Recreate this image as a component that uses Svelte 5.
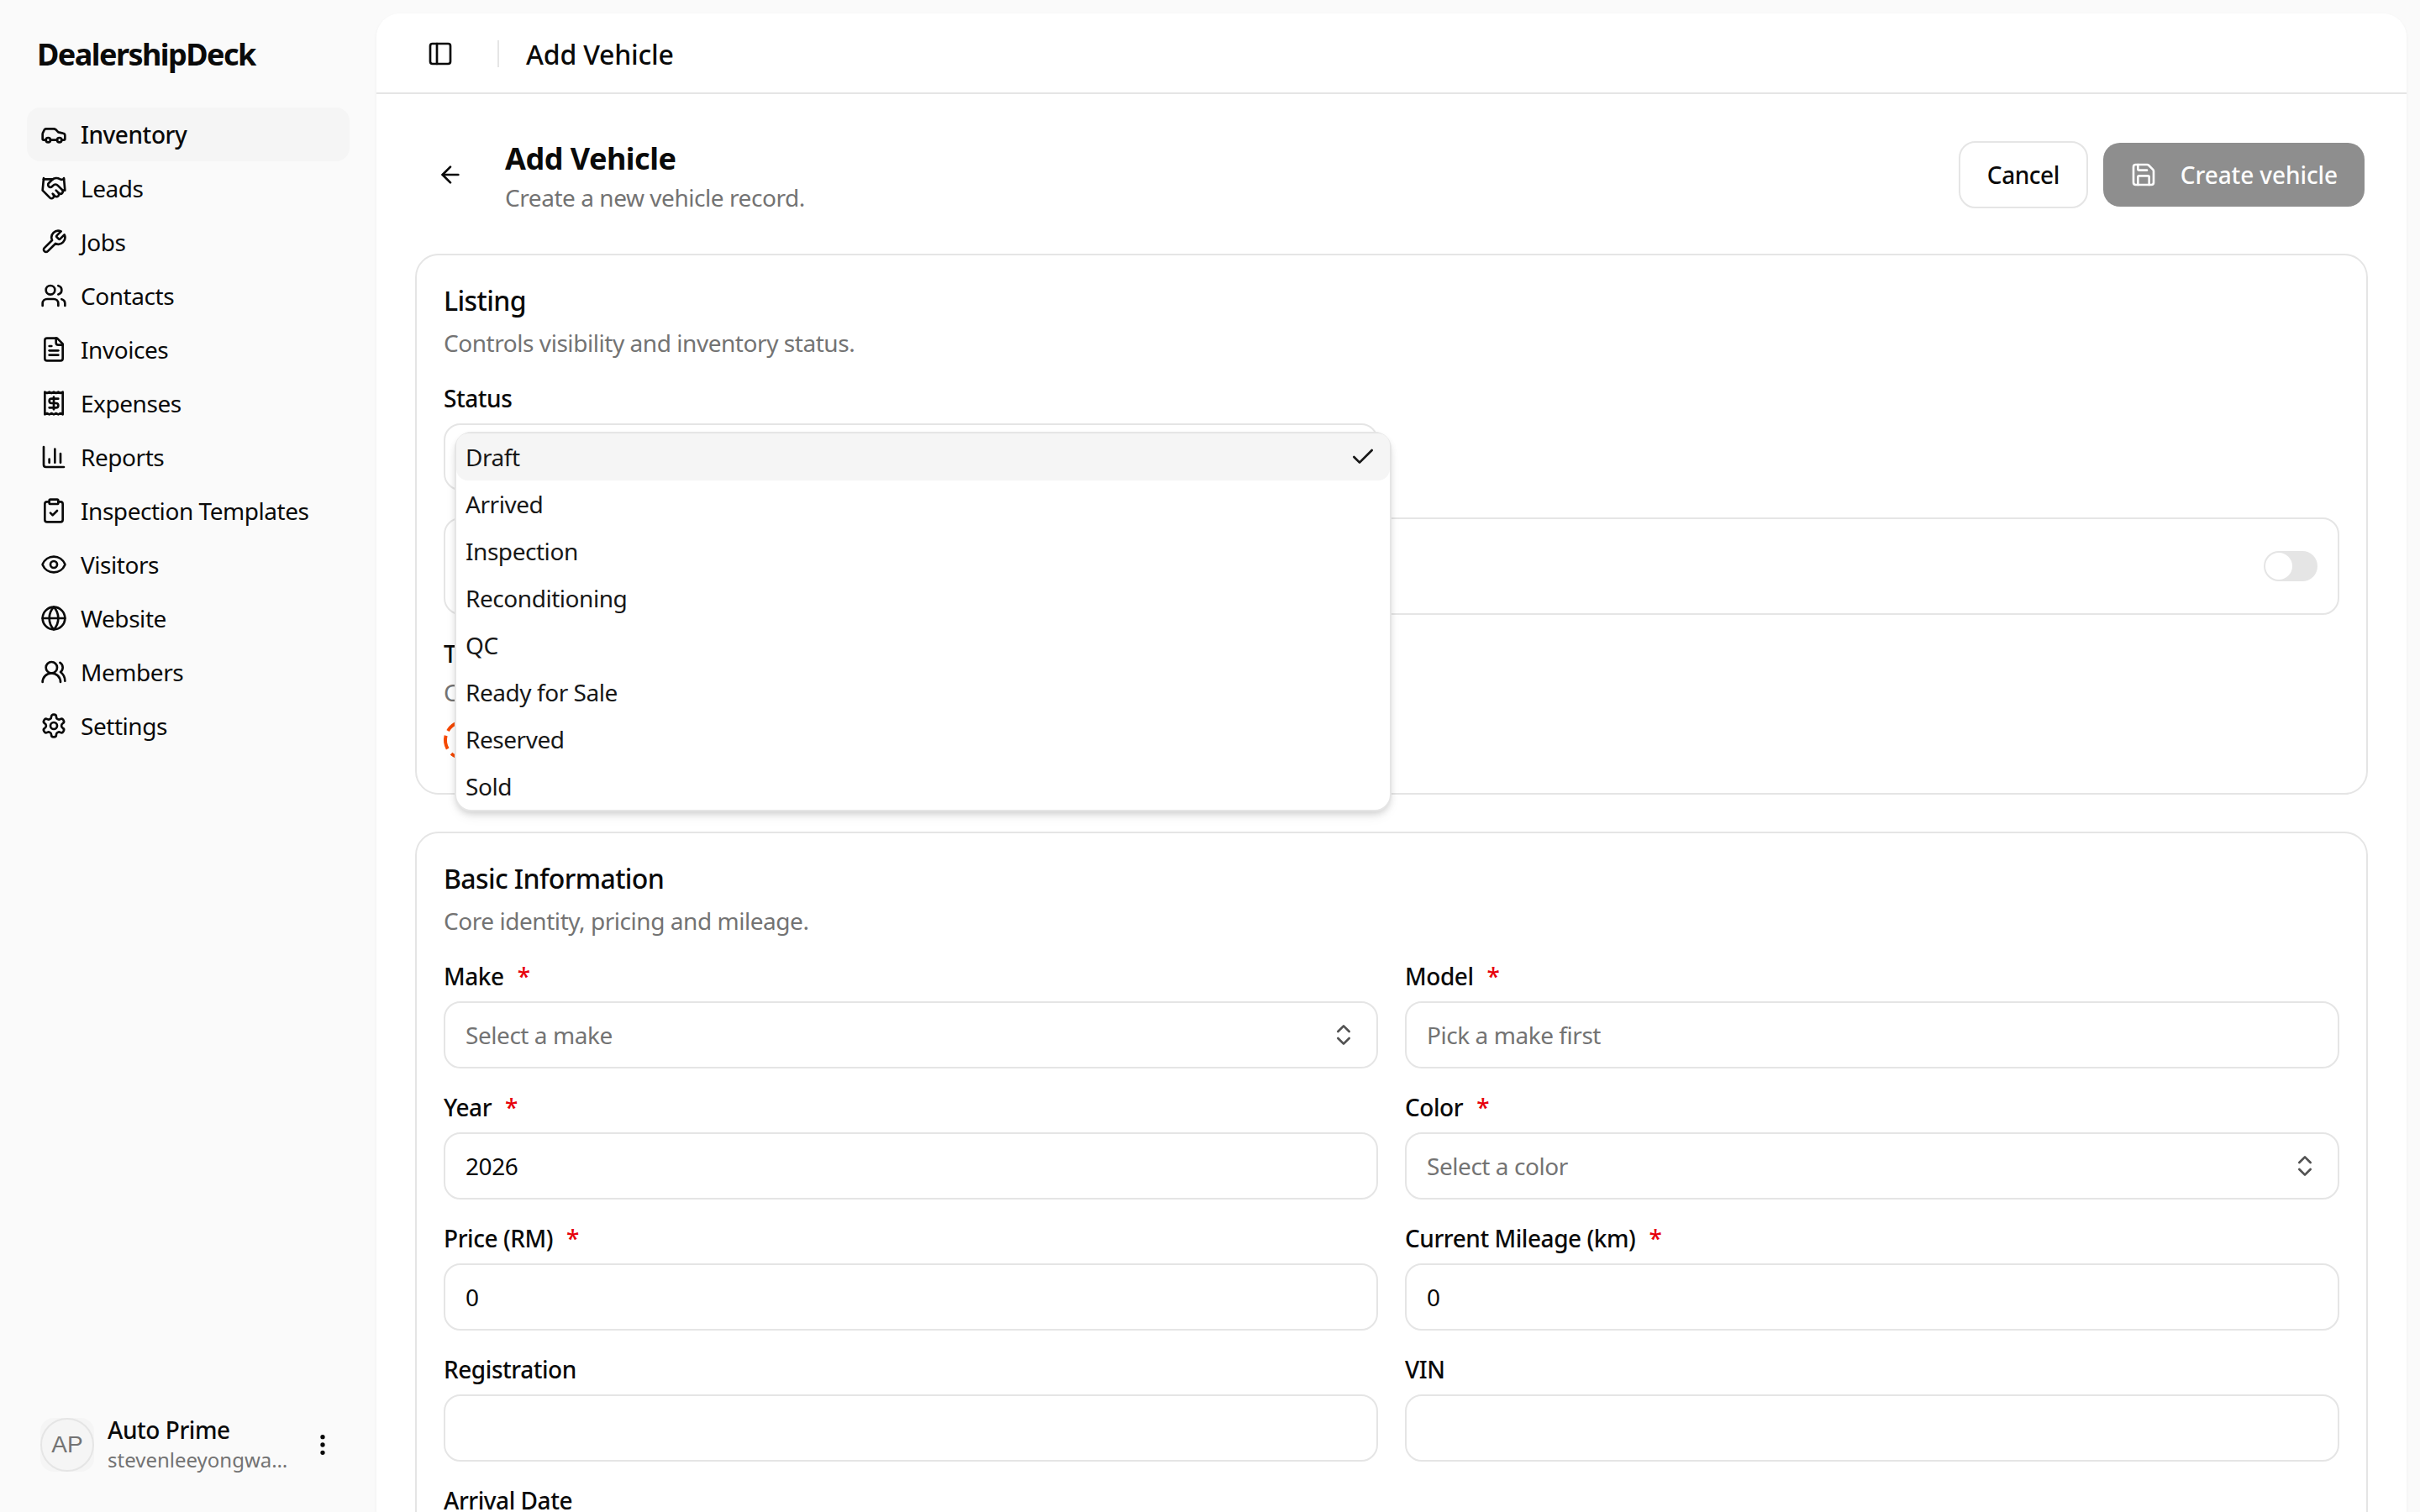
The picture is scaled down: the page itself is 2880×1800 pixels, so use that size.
<script>
  const icons = {
    car: ['M19 17h2c.6 0 1-.4 1-1v-3c0-.9-.7-1.7-1.5-1.9C18.7 10.6 16 10 16 10s-1.3-1.4-2.2-2.3c-.5-.4-1.1-.7-1.8-.7H5c-.6 0-1.1.4-1.4.9l-1.4 2.9A3.7 3.7 0 0 0 2 12v4c0 .6.4 1 1 1h2', 'M5 17a2 2 0 1 0 4 0a2 2 0 1 0-4 0', 'M9 17h6', 'M15 17a2 2 0 1 0 4 0a2 2 0 1 0-4 0'],
    handshake: ['m11 17 2 2a1 1 0 1 0 3-3', 'm14 14 2.5 2.5a1 1 0 1 0 3-3l-3.88-3.88a3 3 0 0 0-4.24 0l-.88.88a1 1 0 1 1-3-3l2.81-2.81a5.79 5.79 0 0 1 7.06-.87l.47.28a2 2 0 0 0 1.42.25L21 4', 'm21 3 1 11h-2', 'M3 3 2 14l6.5 6.5a1 1 0 1 0 3-3', 'M3 4h8'],
    wrench: ['M14.7 6.3a1 1 0 0 0 0 1.4l1.6 1.6a1 1 0 0 0 1.4 0l3.77-3.77a6 6 0 0 1-7.94 7.94l-6.91 6.91a2.12 2.12 0 0 1-3-3l6.91-6.91a6 6 0 0 1 7.94-7.94l-3.76 3.76z'],
    users: ['M16 21v-2a4 4 0 0 0-4-4H6a4 4 0 0 0-4 4v2', 'M5 7a4 4 0 1 0 8 0a4 4 0 1 0-8 0', 'M22 21v-2a4 4 0 0 0-3-3.87', 'M16 3.13a4 4 0 0 1 0 7.75'],
    file: ['M15 2H6a2 2 0 0 0-2 2v16a2 2 0 0 0 2 2h12a2 2 0 0 0 2-2V7Z', 'M14 2v4a2 2 0 0 0 2 2h4', 'M10 9H8', 'M16 13H8', 'M16 17H8'],
    receipt: ['M4 2v20l2-1 2 1 2-1 2 1 2-1 2 1 2-1 2 1V2l-2 1-2-1-2 1-2-1-2 1-2-1-2 1Z', 'M16 8h-6a2 2 0 1 0 0 4h4a2 2 0 1 1 0 4H8', 'M12 17.5v-11'],
    chart: ['M3 3v16a2 2 0 0 0 2 2h16', 'M18 17V9', 'M13 17V5', 'M8 17v-3'],
    clipboard: ['M9 2h6a1 1 0 0 1 1 1v2a1 1 0 0 1-1 1H9a1 1 0 0 1-1-1V3a1 1 0 0 1 1-1z', 'M16 4h2a2 2 0 0 1 2 2v14a2 2 0 0 1-2 2H6a2 2 0 0 1-2-2V6a2 2 0 0 1 2-2h2', 'm9 14 2 2 4-4'],
    eye: ['M2.062 12.348a1 1 0 0 1 0-.696 10.75 10.75 0 0 1 19.876 0 1 1 0 0 1 0 .696 10.75 10.75 0 0 1-19.876 0', 'M9 12a3 3 0 1 0 6 0a3 3 0 1 0-6 0'],
    globe: ['M2 12a10 10 0 1 0 20 0a10 10 0 1 0-20 0', 'M12 2a14.5 14.5 0 0 0 0 20 14.5 14.5 0 0 0 0-20', 'M2 12h20'],
    members: ['M18 21a8 8 0 0 0-16 0', 'M5 8a5 5 0 1 0 10 0a5 5 0 1 0-10 0', 'M22 20c0-3.37-2-6.5-4-8a5 5 0 0 0-.45-8.3'],
    settings: ['M12.22 2h-.44a2 2 0 0 0-2 2v.18a2 2 0 0 1-1 1.73l-.43.25a2 2 0 0 1-2 0l-.15-.08a2 2 0 0 0-2.73.73l-.22.38a2 2 0 0 0 .73 2.73l.15.1a2 2 0 0 1 1 1.72v.51a2 2 0 0 1-1 1.74l-.15.09a2 2 0 0 0-.73 2.73l.22.38a2 2 0 0 0 2.73.73l.15-.08a2 2 0 0 1 2 0l.43.25a2 2 0 0 1 1 1.73V20a2 2 0 0 0 2 2h.44a2 2 0 0 0 2-2v-.18a2 2 0 0 1 1-1.73l.43-.25a2 2 0 0 1 2 0l.15.08a2 2 0 0 0 2.73-.73l.22-.39a2 2 0 0 0-.73-2.73l-.15-.08a2 2 0 0 1-1-1.74v-.5a2 2 0 0 1 1-1.74l.15-.09a2 2 0 0 0 .73-2.73l-.22-.38a2 2 0 0 0-2.73-.73l-.15.08a2 2 0 0 1-2 0l-.43-.25a2 2 0 0 1-1-1.73V4a2 2 0 0 0-2-2z', 'M9 12a3 3 0 1 0 6 0a3 3 0 1 0-6 0'],
    panel: ['M5 3h14a2 2 0 0 1 2 2v14a2 2 0 0 1-2 2H5a2 2 0 0 1-2-2V5a2 2 0 0 1 2-2z', 'M9 3v18'],
    back: ['m12 19-7-7 7-7', 'M19 12H5'],
    save: ['M15.2 3a2 2 0 0 1 1.4.6l3.8 3.8a2 2 0 0 1 .6 1.4V19a2 2 0 0 1-2 2H5a2 2 0 0 1-2-2V5a2 2 0 0 1 2-2z', 'M17 21v-7a1 1 0 0 0-1-1H8a1 1 0 0 0-1 1v7', 'M7 3v4a1 1 0 0 0 1 1h7'],
    updown: ['m7 15 5 5 5-5', 'm7 9 5-5 5 5'],
    check: ['M20 6 9 17l-5-5'],
    dots: ['M11 12a1 1 0 1 0 2 0a1 1 0 1 0-2 0', 'M11 5a1 1 0 1 0 2 0a1 1 0 1 0-2 0', 'M11 19a1 1 0 1 0 2 0a1 1 0 1 0-2 0'],
  };

  const nav = [
    { label: 'Inventory', icon: 'car', active: true },
    { label: 'Leads', icon: 'handshake' },
    { label: 'Jobs', icon: 'wrench' },
    { label: 'Contacts', icon: 'users' },
    { label: 'Invoices', icon: 'file' },
    { label: 'Expenses', icon: 'receipt' },
    { label: 'Reports', icon: 'chart' },
    { label: 'Inspection Templates', icon: 'clipboard' },
    { label: 'Visitors', icon: 'eye' },
    { label: 'Website', icon: 'globe' },
    { label: 'Members', icon: 'members' },
    { label: 'Settings', icon: 'settings' },
  ];

  const statuses = ['Draft', 'Arrived', 'Inspection', 'Reconditioning', 'QC', 'Ready for Sale', 'Reserved', 'Sold'];

  const fields = [
    { label: 'Make', required: true, select: true, placeholder: 'Select a make' },
    { label: 'Model', required: true, placeholder: 'Pick a make first' },
    { label: 'Year', required: true, value: '2026' },
    { label: 'Color', required: true, select: true, placeholder: 'Select a color' },
    { label: 'Price (RM)', required: true, value: '0' },
    { label: 'Current Mileage (km)', required: true, value: '0' },
    { label: 'Registration' },
    { label: 'VIN' },
    { label: 'Arrival Date' },
  ];
</script>

{#snippet icon(name)}
  <svg class="icon" viewBox="0 0 24 24">
    {#each icons[name] as d}<path {d} />{/each}
  </svg>
{/snippet}

<div class="app">
  <aside class="sidebar">
    <div class="brand">DealershipDeck</div>
    <nav class="nav">
      {#each nav as item}
        <a class="nav-item" class:active={item.active} href="#top">
          {@render icon(item.icon)}
          <span>{item.label}</span>
        </a>
      {/each}
    </nav>
    <div class="account">
      <div class="avatar"><span>AP</span></div>
      <div class="account-text">
        <div class="account-name">Auto Prime</div>
        <div class="account-mail">stevenleeyongwa…</div>
      </div>
      {@render icon('dots')}
    </div>
  </aside>

  <main class="inset">
    <header class="topbar">
      <button class="ghost">{@render icon('panel')}</button>
      <div class="divider"></div>
      <div class="topbar-title">Add Vehicle</div>
    </header>

    <div class="content">
      <div class="page-head">
        <button class="ghost back">{@render icon('back')}</button>
        <div class="page-title">
          <h1>Add Vehicle</h1>
          <p class="muted">Create a new vehicle record.</p>
        </div>
        <div class="actions">
          <button class="btn outline">Cancel</button>
          <button class="btn primary">{@render icon('save')}<span>Create vehicle</span></button>
        </div>
      </div>

      <section class="card">
        <h2>Listing</h2>
        <p class="muted sub">Controls visibility and inventory status.</p>

        <div class="half">
          <div class="label">Status</div>
          <div class="status-wrap">
            <button class="field select">Draft</button>
            <div class="menu">
              {#each statuses as s, i}
                <div class="option" class:selected={i === 0}>
                  <span>{s}</span>
                  {#if i === 0}{@render icon('check')}{/if}
                </div>
              {/each}
            </div>
          </div>
        </div>

        <div class="toggle-row">
          <div class="switch"><div class="thumb"></div></div>
        </div>

        <div class="label tag-label">Tags</div>
        <p class="muted tag-sub">Choose tags.</p>
        <div class="swatches">
          <svg class="ring" viewBox="0 0 48 48"><circle cx="24" cy="24" r="22" /></svg>
        </div>
      </section>

      <section class="card">
        <h2>Basic Information</h2>
        <p class="muted sub">Core identity, pricing and mileage.</p>

        <div class="grid">
          {#each fields as f}
            <div>
              <div class="label">
                <span>{f.label}</span>
                {#if f.required}<span class="star">*</span>{/if}
              </div>
              {#if f.select}
                <button class="field select placeholder">
                  <span>{f.placeholder}</span>
                  {@render icon('updown')}
                </button>
              {:else}
                <input class="field" value={f.value ?? ''} placeholder={f.placeholder ?? ''} />
              {/if}
            </div>
          {/each}
        </div>
      </section>
    </div>
  </main>
</div>

<style>
  :global(body) {
    background: #fafafa;
    overflow: hidden;
  }
  .app {
    display: flex;
    height: 1800px;
    overflow: hidden;
    font-family: "Noto Sans", sans-serif;
    font-size: 28px;
    letter-spacing: -0.45px;
    color: #0a0a0a;
    background: #fafafa;
  }
  .icon {
    flex: none;
    width: 32px;
    height: 32px;
    fill: none;
    stroke: currentColor;
    stroke-width: 2;
    stroke-linecap: round;
    stroke-linejoin: round;
  }
  button {
    font: inherit;
    letter-spacing: inherit;
    color: inherit;
    background: none;
    border: 0;
    padding: 0;
  }

  /* sidebar */
  .sidebar {
    flex: none;
    width: 448px;
    display: flex;
    flex-direction: column;
  }
  .brand {
    height: 128px;
    padding-left: 44px;
    display: flex;
    align-items: center;
    font-size: 36px;
    font-weight: 700;
    letter-spacing: -1.55px;
  }
  .nav {
    padding: 0 32px;
  }
  .nav-item {
    height: 64px;
    padding-left: 16px;
    display: flex;
    align-items: center;
    gap: 16px;
    border-radius: 16px;
    color: inherit;
    text-decoration: none;
  }
  .nav-item.active {
    background: #f5f5f5;
    font-weight: 500;
  }
  .account {
    margin-top: auto;
    padding: 0 48px 45px;
    display: flex;
    align-items: center;
    gap: 16px;
  }
  .avatar {
    flex: none;
    width: 64px;
    height: 64px;
    border-radius: 16px;
    background: #f5f5f5;
    display: flex;
  }
  .avatar span {
    flex: 1;
    border: 2px solid #e5e5e5;
    border-radius: 50%;
    display: flex;
    align-items: center;
    justify-content: center;
    font-family: "Liberation Sans", sans-serif;
    font-size: 28px;
    letter-spacing: 0;
    color: #737373;
  }
  .account-text {
    flex: 1;
    min-width: 0;
  }
  .account-name {
    font-weight: 500;
    line-height: 35px;
  }
  .account-mail {
    font-size: 24px;
    line-height: 35px;
    letter-spacing: 0;
    color: #737373;
    white-space: nowrap;
  }

  /* main */
  .inset {
    flex: 1;
    min-width: 0;
    margin: 16px 16px 0 0;
    background: #fff;
    border-radius: 28px 28px 0 0;
    box-shadow: 0 2px 4px rgba(0, 0, 0, 0.05);
  }
  .topbar {
    height: 96px;
    padding: 2px 0 0 60px;
    box-sizing: border-box;
    border-bottom: 2px solid #e5e5e5;
    display: flex;
    align-items: center;
  }
  .ghost {
    display: flex;
  }
  .divider {
    width: 2px;
    height: 32px;
    margin: 0 32px 0 52px;
    background: #e5e5e5;
  }
  .topbar-title {
    font-size: 32px;
    font-weight: 500;
    letter-spacing: -0.2px;
  }
  .content {
    padding: 0 46px;
  }
  .page-head {
    height: 80px;
    padding: 0 4px 0 26px;
    margin: 56px 0 54px;
    display: flex;
    align-items: center;
  }
  .back {
    margin-right: 49px;
  }
  .page-title {
    flex: 1;
    padding-top: 6px;
  }
  h1 {
    margin: 0;
    font-size: 36px;
    font-weight: 700;
    line-height: 44px;
    letter-spacing: -0.5px;
  }
  .page-title p {
    margin: 4px 0 0;
    line-height: 40px;
  }
  .muted {
    color: #737373;
  }
  .actions {
    display: flex;
    align-items: center;
    gap: 18px;
  }
  .btn {
    display: flex;
    align-items: center;
    font-weight: 500;
    border-radius: 20px;
    box-sizing: border-box;
  }
  .outline {
    height: 80px;
    padding: 0 32px;
    border: 2px solid #e5e5e5;
    background: #fff;
  }
  .primary {
    height: 76px;
    padding: 0 32px;
    gap: 28px;
    background: #8e8e8e;
    color: #fcfcfc;
    letter-spacing: -0.1px;
  }

  /* cards */
  .card {
    margin-bottom: 44px;
    padding: 32px;
    border: 2px solid #e5e5e5;
    border-radius: 28px;
  }
  h2 {
    margin: 0;
    font-size: 32px;
    font-weight: 500;
    line-height: 44px;
    letter-spacing: -0.6px;
  }
  .sub {
    margin: 8px 0 32px;
    line-height: 40px;
  }
  .label {
    height: 28px;
    margin-bottom: 16px;
    display: flex;
    align-items: center;
    gap: 16px;
    font-weight: 500;
    line-height: 28px;
  }
  .star {
    color: #e7000b;
  }
  .half {
    width: 1112px;
  }
  .status-wrap {
    position: relative;
  }
  .field {
    width: 100%;
    height: 80px;
    padding: 0 24px;
    box-sizing: border-box;
    border: 2px solid #e5e5e5;
    border-radius: 20px;
    background: #fff;
    font: inherit;
    letter-spacing: inherit;
    color: inherit;
    outline: none;
    display: block;
    text-align: left;
  }
  .field::placeholder,
  .placeholder {
    color: #737373;
  }
  .select {
    display: flex;
    align-items: center;
    justify-content: space-between;
  }
  .select .icon {
    color: #525252;
    margin-right: -1px;
  }
  .menu {
    position: absolute;
    top: 10px;
    left: 13px;
    width: 1115px;
    box-sizing: border-box;
    border: 2px solid #e5e5e5;
    border-radius: 20px;
    background: #fff;
    box-shadow: 0 4px 8px -2px rgba(0, 0, 0, 0.16), 0 8px 16px -4px rgba(0, 0, 0, 0.08);
    z-index: 2;
  }
  .option {
    height: 56px;
    padding: 0 16px 0 11px;
    display: flex;
    align-items: center;
    justify-content: space-between;
    border-radius: 14px;
    color: #171717;
  }
  .option.selected {
    background: #f5f5f5;
  }
  .toggle-row {
    height: 116px;
    margin: 32px 0;
    padding-right: 24px;
    box-sizing: border-box;
    border: 2px solid #e5e5e5;
    border-radius: 20px;
    display: flex;
    align-items: center;
    justify-content: flex-end;
  }
  .switch {
    width: 64px;
    height: 36px;
    padding: 2px;
    box-sizing: border-box;
    border-radius: 18px;
    background: #e5e5e5;
  }
  .thumb {
    width: 32px;
    height: 32px;
    border-radius: 50%;
    background: #fff;
  }
  .tag-sub {
    margin: -4px 0 0;
    line-height: 40px;
  }
  .swatches {
    height: 56px;
    margin-top: 12px;
    padding-top: 1px;
    box-sizing: border-box;
  }
  .ring {
    display: block;
    width: 48px;
    height: 48px;
    fill: none;
    stroke: #f54900;
    stroke-width: 4;
    stroke-dasharray: 16 7;
    transform: rotate(-150deg);
  }
  .grid {
    display: grid;
    grid-template-columns: 1fr 1fr;
    gap: 32px;
  }
</style>
